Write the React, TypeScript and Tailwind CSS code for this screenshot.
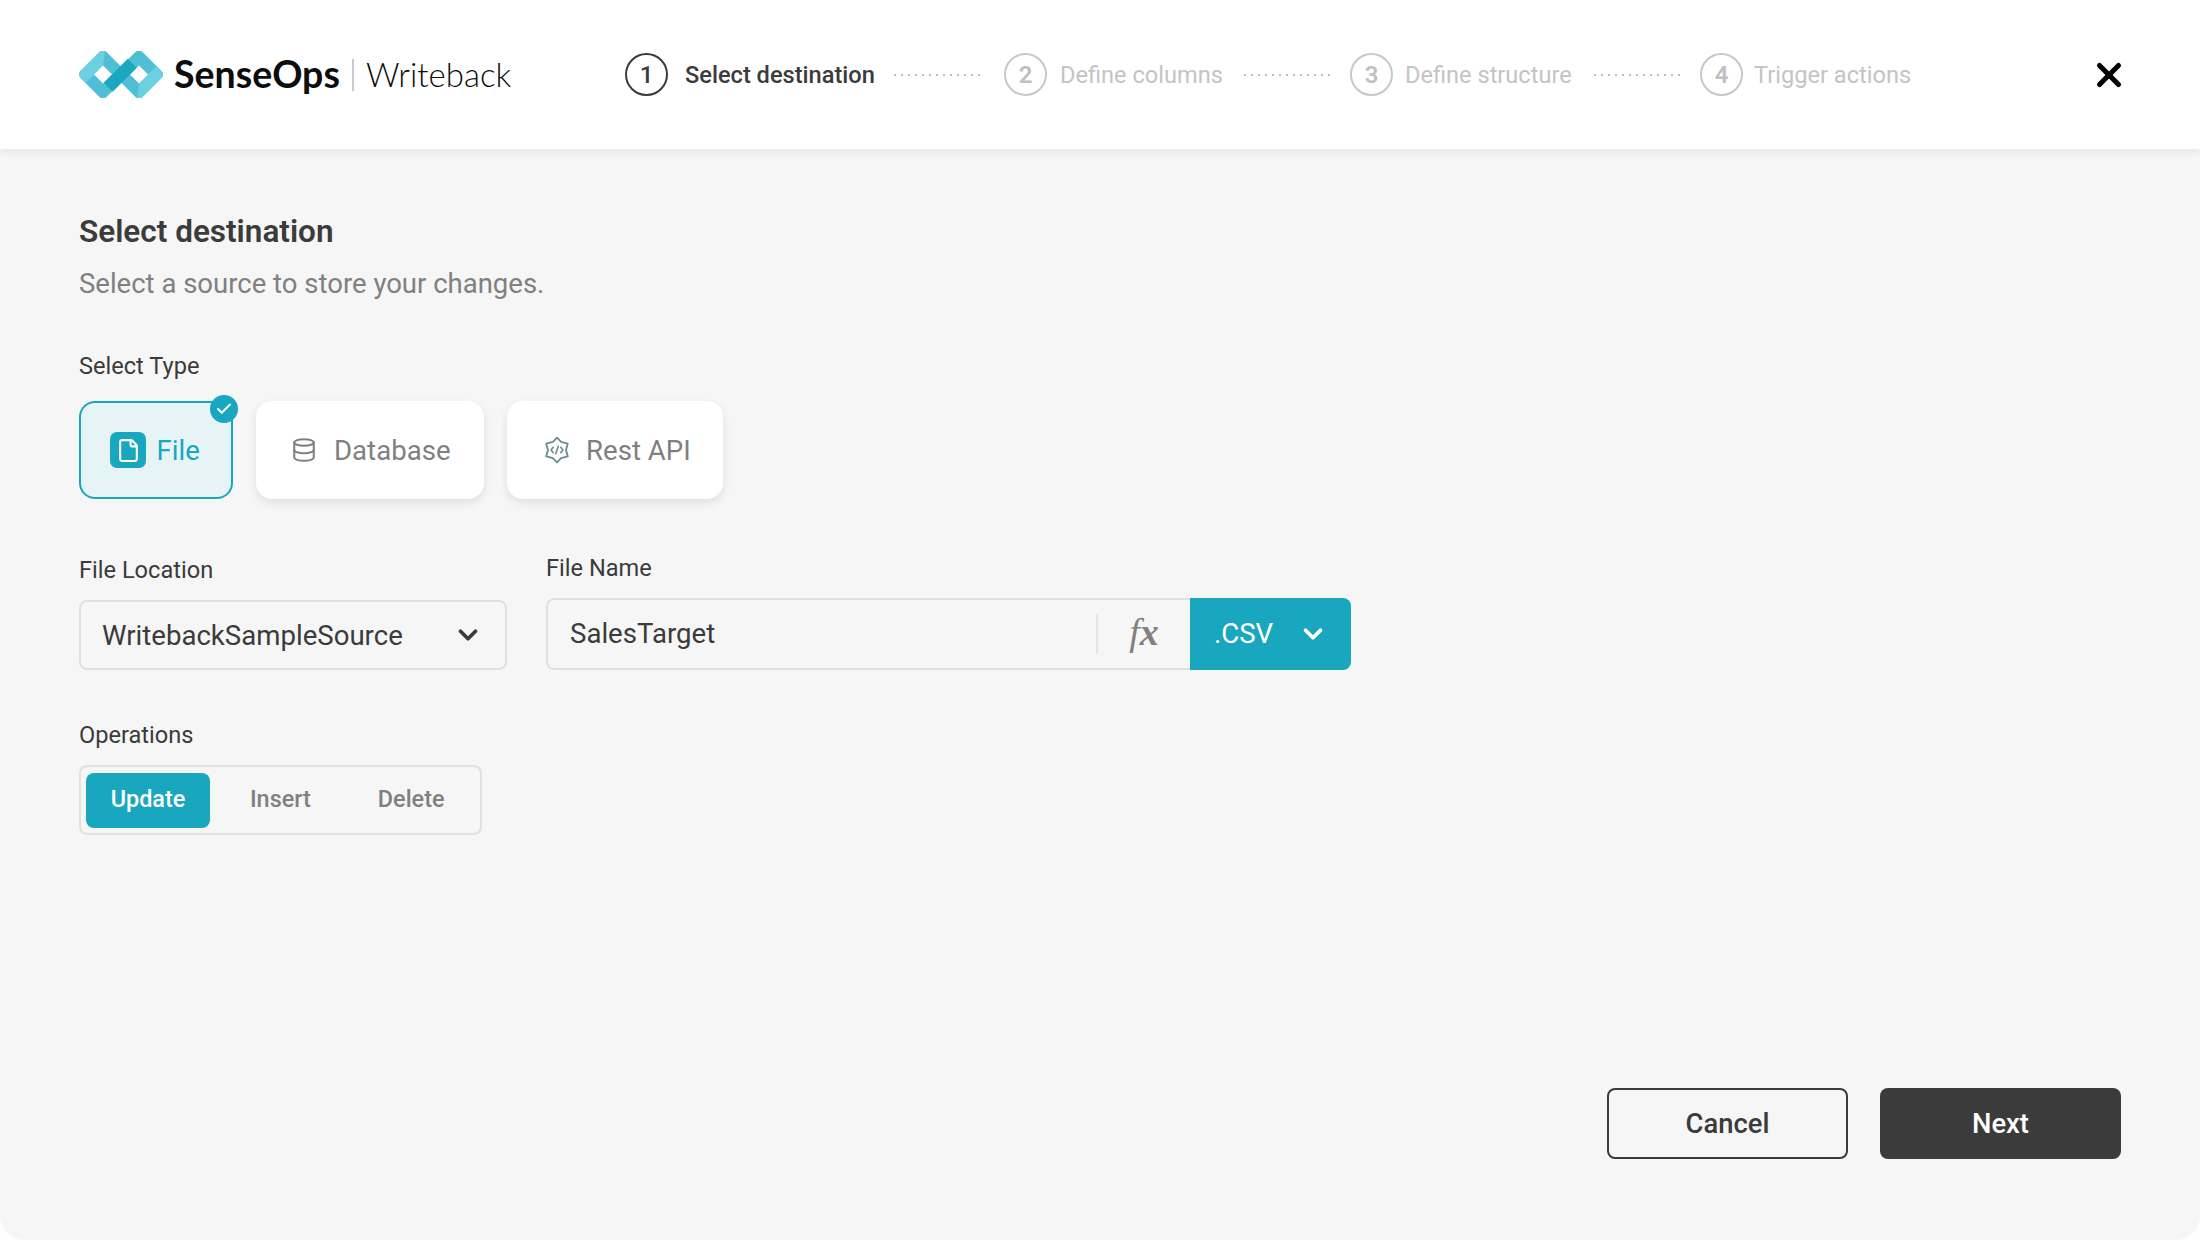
import React from 'react'
import { Check, ChevronDown, Database, File, X } from 'lucide-react'

const roboto = "font-['Roboto',sans-serif]"

function Logo() {
  return (
    <svg width="84" height="47" viewBox="0 0 84 47" className="shrink-0">
      <defs>
        <clipPath id="logo-left">
          <rect x="5.6" y="5.1" width="36.8" height="36.8" rx="5" transform="rotate(45 24 23.5)" />
        </clipPath>
      </defs>
      {[0, 180].map((turn) => (
        <g key={turn} transform={`rotate(${turn} 42 23.5)`}>
          <g clipPath="url(#logo-left)">
            <rect x="-4" y="-4" width="60" height="56" fill="#50bfd5" />
            <polygon points="15,23.5 24,14.5 26,-2 -4,-2 -4,34.5 7.5,31" fill="#6bd0e0" />
          </g>
          <polygon points="15,23.5 24,14.5 33,23.5 24,32.5" fill="#fff" />
        </g>
      ))}
      <polygon points="24.75,31.75 33.75,40.75 57.75,16.75 48.75,7.75" fill="#1aa7bf" />
    </svg>
  )
}

function RestIcon() {
  return (
    <svg width="28" height="28" viewBox="0 0 26 26" fill="none" stroke="#6d8c93" strokeWidth="1.7" strokeLinejoin="round" strokeLinecap="round">
      <path d="M13 1.500L16.800 5.400 23 7 21.400 13 23 19 16.800 20.600 13 24.500 9.200 20.600 3 19 4.600 13 3 7 9.200 5.400z" />
      <path d="M9.500 10.500L7.500 13 9.500 15.500M16.500 10.500L18.500 13 16.500 15.500M14.200 9.500L11.800 16.500" strokeWidth="1.500" />
    </svg>
  )
}

function Dots({ w, className }: { w: number; className: string }) {
  return (
    <svg width={w} height="2" className={`shrink-0 ${className}`}>
      <line x1="0" y1="1" x2={w} y2="1" stroke="#bdbdbd" strokeWidth="2" strokeDasharray="2 5" />
    </svg>
  )
}

function Step({ n, label, active, w, gap }: { n: number; label: string; active?: boolean; w: string; gap: string }) {
  return (
    <div className={`flex shrink-0 items-center ${gap}`}>
      <div
        className={`flex h-[43px] w-[43px] items-center justify-center rounded-full border-2 text-[24px] ${
          active ? 'border-[#3b3b3b] font-medium text-[#3b3b3b]' : 'border-[#c8c8c8] font-semibold text-[#c0c0c0]'
        }`}
      >
        {n}
      </div>
      <span className={`${w} mt-[2px] whitespace-nowrap text-[23.6px] ${active ? 'font-medium text-[#3b3b3b]' : 'text-[#c4c4c4]'}`}>{label}</span>
    </div>
  )
}

function TypeCard({ w, children, className }: { w: string; className: string; children: React.ReactNode }) {
  return (
    <div className={`flex h-[98px] ${w} ${className} items-center rounded-2xl bg-white text-[27.6px] text-[#808080] shadow-[0_4px_10px_rgba(0,0,0,0.09)]`}>
      {children}
    </div>
  )
}

export default function App() {
  return (
    <div className={`h-[1240px] w-[2200px] bg-white ${roboto}`}>
      <div className="flex h-full flex-col overflow-hidden rounded-b-[24px] bg-[#f6f6f6]">
        <header className="flex h-[149px] shrink-0 items-center bg-white pl-[78.5px] pr-[78px] shadow-[0_2px_10px_rgba(0,0,0,0.08)]">
          <Logo />
          <span className="mb-[2px] ml-[11.5px] w-[166px] font-['Lato',sans-serif] text-[37.5px] font-bold leading-none text-[#0d0d0d]">SenseOps</span>
          <span className="ml-[12px] h-[32px] w-[2px] bg-[#c9c9c9]" />
          <span className="ml-[12px] w-[146px] font-['Lato',sans-serif] text-[33px] font-light leading-none text-[#0d0d0d]">Writeback</span>
          <div className="ml-[113px] flex items-center">
            <Step n={1} label="Select destination" active w="w-[189px]" gap="gap-[17px]" />
            <Dots w={91} className="ml-[20px] mr-[19px]" />
            <Step n={2} label="Define columns" w="w-[162px]" gap="gap-[13px]" />
            <Dots w={87} className="ml-[22px] mr-[19px]" />
            <Step n={3} label="Define structure" w="w-[167px]" gap="gap-[12px]" />
            <Dots w={87} className="ml-[22px] mr-[19px]" />
            <Step n={4} label="Trigger actions" w="w-[155px]" gap="gap-[11px]" />
          </div>
          <X className="ml-auto mr-[-6px] text-black" size={38} strokeWidth={3.2} />
        </header>

        <main className="flex flex-1 flex-col pl-[79px] pr-[79px]">
          <h1 className="mt-[65px] text-[31.5px] font-semibold leading-[36px] text-[#3b3b3b]">Select destination</h1>
          <p className="mt-[16px] text-[27.5px] leading-[36px] text-[#808080]">Select a source to store your changes.</p>
          <div className="mt-[48px] text-[23.6px] leading-[32px] text-[#3b3b3b]">Select Type</div>

          <div className="mt-[19px] flex gap-[23px]">
            <div className="relative flex h-[98px] w-[154px] items-center gap-[10.5px] rounded-2xl border-2 border-[#19a7bf] bg-[#e6f4f6] pl-[29px] text-[27.6px] text-[#19a7bf]">
              <span className="flex h-[36px] w-[36px] items-center justify-center rounded-[7px] bg-[#19a7bf]">
                <File size={25} strokeWidth={2} className="text-white" />
              </span>
              <span className="mt-[2px]">File</span>
              <span className="absolute right-[-7px] top-[-8px] flex h-[28px] w-[28px] items-center justify-center rounded-full bg-[#19a7bf]">
                <Check size={18} strokeWidth={2.6} className="text-white" />
              </span>
            </div>
            <TypeCard w="w-[228px]" className="gap-[17px] pl-[35px]">
              <Database size={26} strokeWidth={1.9} />
              <span className="mt-[2px]">Database</span>
            </TypeCard>
            <TypeCard w="w-[216px]" className="gap-[15px] pl-[36px]">
              <RestIcon />
              <span className="mt-[2px]">Rest API</span>
            </TypeCard>
          </div>

          <div className="mt-[53px] flex items-end">
            <div className="w-[428px]">
              <div className="text-[23.6px] leading-[32px] text-[#3b3b3b]">File Location</div>
              <div className="mt-[14px] flex h-[70px] items-center justify-between rounded-[8px] border-2 border-[#e0e0e0] pl-[21px] pr-[22px] text-[27.6px] text-[#3b3b3b]">
                <span className="mt-[2px]">WritebackSampleSource</span>
                <ChevronDown size={30} strokeWidth={3} />
              </div>
            </div>
            <div className="ml-[39px]">
              <div className="text-[23.6px] leading-[32px] text-[#3b3b3b]">File Name</div>
              <div className="mt-[14px] flex h-[72px] w-[805px] overflow-hidden rounded-[8px]">
                <div className="flex flex-1 items-center rounded-l-[8px] border-2 border-r-0 border-[#e0e0e0] pl-[22px] text-[27.6px] text-[#3b3b3b]">
                  <span className="flex-1">SalesTarget</span>
                  <span className="h-[40px] w-[2px] bg-[#e4e4e4]" />
                  <span className="mb-[4px] w-[92px] text-center font-['Liberation_Serif',serif] text-[38px] italic text-[#808080]">
                    f<b>x</b>
                  </span>
                </div>
                <div className="flex w-[161px] items-center justify-between bg-[#19a7bf] pl-[24px] pr-[23px] text-[27.6px] text-white">
                  .CSV
                  <ChevronDown size={30} strokeWidth={3} />
                </div>
              </div>
            </div>
          </div>

          <div className="mt-[49px] text-[23.6px] leading-[32px] text-[#3b3b3b]">Operations</div>
          <div className="mt-[14px] flex h-[70px] w-[403px] items-center rounded-[8px] border-2 border-[#e0e0e0] pl-[5px] text-[23.4px] font-medium text-[#808080]">
            <span className="flex h-[55px] w-[124px] items-center justify-center rounded-[8px] bg-[#19a7bf] text-white">Update</span>
            <span className="ml-[40px]">Insert</span>
            <span className="ml-[67px]">Delete</span>
          </div>

          <div className="mt-auto mb-[81px] flex justify-end gap-[32px] text-[27.4px] font-medium">
            <button className="h-[71px] w-[241px] rounded-[8px] border-2 border-[#3b3b3b] pt-[2px] text-[#3b3b3b]">Cancel</button>
            <button className="h-[71px] w-[241px] rounded-[8px] bg-[#3b3b3b] pt-[2px] text-white">Next</button>
          </div>
        </main>
      </div>
    </div>
  )
}
